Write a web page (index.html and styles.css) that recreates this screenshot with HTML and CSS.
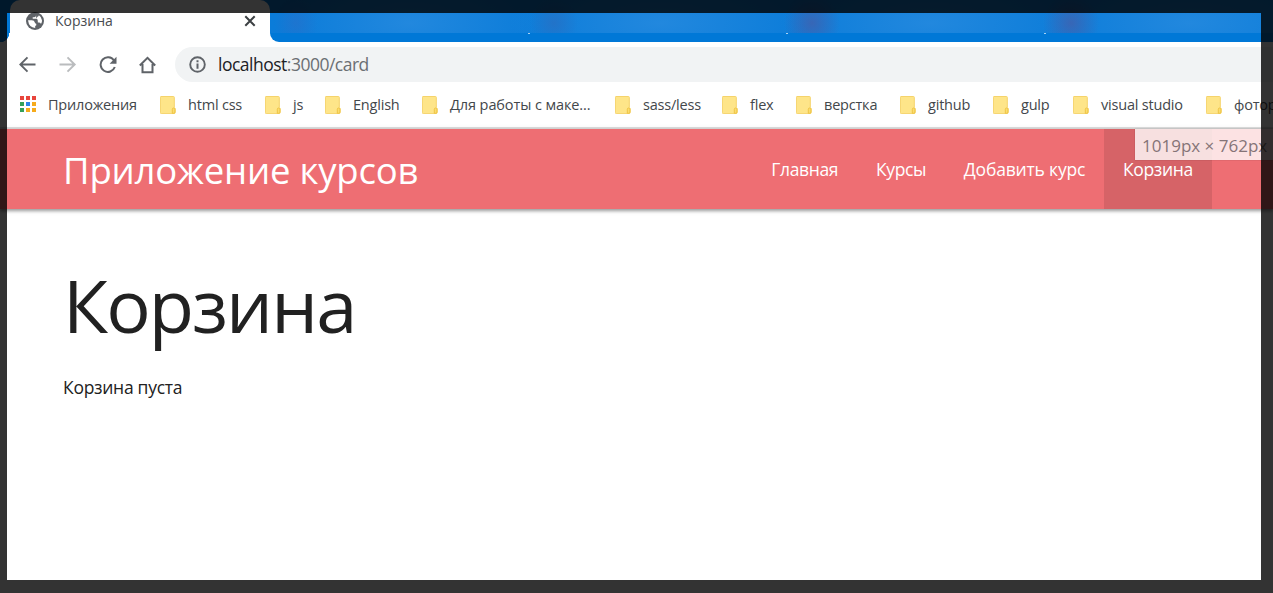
FILE: index.html
```html
<!DOCTYPE html>
<html lang="ru">
<head>
<meta charset="utf-8">
<title>Корзина</title>
<link rel="stylesheet" href="styles.css">
</head>
<body>
<svg class="defs" width="0" height="0">
  <symbol id="folder" viewBox="0 0 16 18">
    <path d="M1 .5h12.500q.8 0 .8.800v10.200l.9.900v4q0 1.200-1.200 1.200H1.200q-.8 0-.8-.8V1.300Q.4.500 1 .5z" fill="#fee589" stroke="#f5d36b"/>
    <path d="M12.300 17.300v-4q0-1.300 1.300-1.300t1.300 1.300v2.800q0 1.200-1.200 1.200z" fill="#fbdc70" stroke="#edc23f" stroke-width=".9"/>
  </symbol>
</svg>
<div class="screen">
  <header class="tabstrip">
    <div class="tab">
      <svg class="globe" width="18" height="18" viewBox="0 0 18 18"><circle cx="9" cy="9" r="9" fill="#5f6368"/><path d="M10 2.200v1.300Q10 5.200 8.300 5.200H6.700v1.600h3.500q1.600.2 1.600 2v1.700h1.500q1.300.1 1.700 1.600Q16.200 10.500 16 8.300 15.600 5 12.900 3.300q-.2 1.400-1.500 1.500l-1.100 1.900" fill="#fff"/><path d="M2 8.300h3.800q2.700.1 2.900 2 .1 1.200 1.500 1.500.8 1.700-1 2.300v1.800Q3 15.800 2 8.300z" fill="#fff"/></svg>
      <span class="tab-title">Корзина</span>
      <svg class="close" width="12" height="12" viewBox="0 0 12 12"><path d="M1.300 1.300l9.400 9.400M10.700 1.300l-9.400 9.400" stroke="#3c4043" stroke-width="2"/></svg>
    </div>
    <div class="tabs-rest"><i></i><i></i><i></i></div>
  </header>
  <div class="toolbar">
    <svg width="18" height="18" viewBox="0 0 18 18" fill="none" stroke="#5f6368" stroke-width="1.900"><path d="M16.500 8.500h-15M8.500 1.300 1.300 8.500l7.200 7.200"/></svg>
    <svg width="18" height="18" viewBox="0 0 18 18" fill="none" stroke="#babcbe" stroke-width="1.900"><path d="M.5 8.500h15M8.500 1.300l7.200 7.200-7.200 7.200"/></svg>
    <svg width="18" height="18" viewBox="0 0 18 18"><path d="M15 4.500A7.300 7.300 0 1 0 15.800 11" fill="none" stroke="#5f6368" stroke-width="2"/><path d="M17.500.800v6.900h-6.900z" fill="#5f6368"/></svg>
    <svg width="18" height="18" viewBox="0 0 18 18"><path d="M.8 9.500 8.500 1.900l7.700 7.600M3.500 8v8.300h10V8" fill="none" stroke="#5f6368" stroke-width="2"/></svg>
    <div class="address">
      <svg width="18" height="18" viewBox="0 0 18 18"><circle cx="8.500" cy="8.500" r="7.300" fill="none" stroke="#5f6368" stroke-width="1.900"/><path d="M8.500 4.300v2M8.500 7.600v5.200" stroke="#5f6368" stroke-width="2"/></svg>
      <span class="url">localhost<span class="path">:3000/card</span></span>
    </div>
  </div>
  <nav class="bookmarks">
    <a class="bm w140"><svg class="apps" viewBox="0 0 16 16"><path d="M0 0h4v4H0zM6 0h4v4H6zM12 0h4v4h-4z" fill="#e8453c"/><path d="M0 6h4v4H0zM0 12h4v4H0z" fill="#34a05a"/><path d="M6 6h4v4H6z" fill="#2b84ea"/><path d="M12 6h4v4h-4zM12 12h4v4h-4zM6 12h4v4H6z" fill="#f6ab1c"/></svg><span>Приложения</span></a>
    <a class="bm w105"><svg><use href="#folder"/></svg><span>html css</span></a>
    <a class="bm w60"><svg><use href="#folder"/></svg><span>js</span></a>
    <a class="bm w97"><svg><use href="#folder"/></svg><span>English</span></a>
    <a class="bm w193"><svg><use href="#folder"/></svg><span class="long">Для работы с маке...</span></a>
    <a class="bm w107"><svg><use href="#folder"/></svg><span>sass/less</span></a>
    <a class="bm w74"><svg><use href="#folder"/></svg><span>flex</span></a>
    <a class="bm w104"><svg><use href="#folder"/></svg><span>верстка</span></a>
    <a class="bm w93"><svg><use href="#folder"/></svg><span>github</span></a>
    <a class="bm w80"><svg><use href="#folder"/></svg><span>gulp</span></a>
    <a class="bm w133"><svg><use href="#folder"/></svg><span>visual studio</span></a>
    <a class="bm w100"><svg><use href="#folder"/></svg><span>фотор</span></a>
  </nav>
  <nav class="navbar">
    <a class="brand">Приложение курсов</a>
    <div class="links">
      <a>Главная</a><a>Курсы</a><a class="add">Добавить курс</a><a class="active">Корзина</a>
    </div>
  </nav>
  <main class="content">
    <h1>Корзина</h1>
    <p>Корзина пуста</p>
  </main>
  <div class="size-tip">1019px × 762px</div>
  <div class="frame"></div>
</div>
</body>
</html>
```

FILE: styles.css
```css
* { box-sizing: border-box; }
body { margin: 0; background: #fff; font-family: "Open Sans", "Noto Sans", sans-serif; }
.defs { position: absolute; }
.screen { position: relative; width: 1273px; height: 593px; overflow: hidden; white-space: nowrap; }

.tabstrip { position: relative; display: flex; height: 42px; padding-left: 10px; background: linear-gradient(#0078d7, #0078d7) 0 0 / 10px 100% no-repeat; }
.tabstrip::before { content: ""; position: absolute; left: 0; bottom: 0; width: 10px; height: 9px; background: radial-gradient(circle at 0 0, #0078d7 9px, #fff 9.500px); }
.tab { display: flex; align-items: center; width: 260px; padding: 0 14px 0 16px; background: #fff; border-radius: 10px 10px 0 0; position: relative; }
.tab::before { content: ""; position: absolute; z-index: -1; inset: 0 0 20px; background: #0078d7; }
.globe { margin-right: 11px; }
.tab-title { flex: 1; padding-bottom: 2px; font-size: 14px; color: #494c50; }
.tabs-rest { flex: 1; border-radius: 0 0 0 9px; display: flex; gap: 256px; padding: 33px 0 0 258px;
  background:
    linear-gradient(#0078d7, #0078d7) 0 33px / 100% 9px no-repeat,
    radial-gradient(ellipse 22px 26px at 26px 23px, rgba(38,112,202,.65), transparent),
    radial-gradient(ellipse 24px 26px at 284px 23px, rgba(38,112,196,.8), transparent),
    radial-gradient(ellipse 28px 30px at 542px 23px, rgba(62,98,176,.85), transparent),
    radial-gradient(ellipse 28px 30px at 801px 23px, rgba(62,98,176,.85), transparent),
    radial-gradient(ellipse 130px 50px at 140px 23px, #2288de, transparent),
    radial-gradient(ellipse 150px 50px at 390px 23px, #2288de, transparent),
    radial-gradient(ellipse 150px 50px at 660px 23px, #2288de, transparent),
    radial-gradient(ellipse 150px 50px at 920px 23px, #2288de, transparent),
    #0b7cd9; }
.tabs-rest i { width: 2px; height: 1px; background: #a9d2f3; }

.toolbar { display: flex; align-items: center; height: 45px; padding-left: 19px; gap: 22px; }
.address { flex: 1; display: flex; align-items: center; gap: 11px; height: 35px; margin-left: -4px; padding-left: 14px; border-radius: 18px 0 0 18px; background: #f1f3f4; }
.url { padding-bottom: 2px; font-size: 17.500px; letter-spacing: -.5px; color: #202124; }
.path { color: #6b6f73; }

.bookmarks { display: flex; align-items: center; height: 42px; padding: 0 0 6px 20px; border-bottom: 2px solid #dedede; }
.bm { display: flex; align-items: center; flex: none; color: #43474b; font-size: 14.500px; letter-spacing: -.2px; }
.bm svg { width: 16px; height: 18px; margin: 2px 12px 0 0; flex: none; }
.bm .apps { margin-top: 0; }
.bm .long { letter-spacing: -.1px; }
.w60 { width: 60px; } .w74 { width: 74px; } .w80 { width: 80px; } .w93 { width: 93px; }
.w97 { width: 97px; } .w100 { width: 100px; } .w104 { width: 104px; } .w105 { width: 105px; }
.w107 { width: 107px; } .w133 { width: 133px; } .w140 { width: 140px; } .w193 { width: 193px; }

.navbar { display: flex; justify-content: space-between; height: 80px; padding: 0 61px 0 63px; background: #ee6e73; color: #fff; box-shadow: 0 2px 3px rgba(0,0,0,.32), 0 1px 6px rgba(0,0,0,.14); }
.brand { font-size: 36.500px; line-height: 83px; letter-spacing: -.18px; }
.links { display: flex; line-height: 80px; font-size: 17.500px; letter-spacing: -.35px; }
.links a { padding: 0 19.200px 0 18.500px; }
.links .add { letter-spacing: -.18px; }
.links .active { background: #d66367; }

.content { padding: 46px 63px; color: #212121; }
h1 { margin: 0; font-size: 74px; font-weight: 400; line-height: 100px; letter-spacing: -1.900px; }
p { margin: 19px 0 0; font-size: 17.500px; line-height: 26px; letter-spacing: -.28px; }

.size-tip { position: absolute; left: 1135px; top: 129px; width: 138px; height: 31px; padding-left: 7px; line-height: 33px; font-size: 17px; color: #857477; background: rgba(255,255,255,.8); box-shadow: 0 0 1px rgba(0,0,0,.3); }
.frame { position: absolute; inset: 0; border: solid rgba(0,0,0,.8); border-width: 13px 12px 13px 7px; }
```
